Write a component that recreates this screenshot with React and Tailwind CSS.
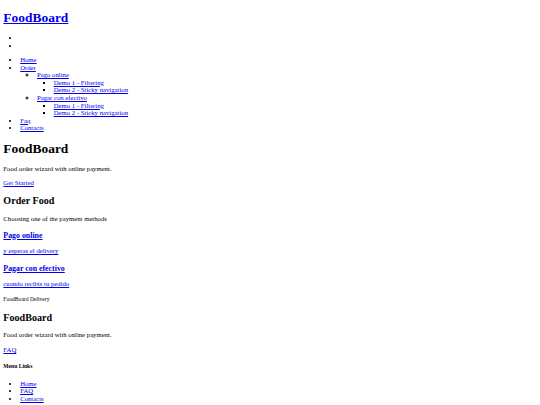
import React from 'react';

// enlaces con el estilo por defecto del navegador
const A = ({ children, className = '' }) => (
    <a href="#" className={`text-[#0000ee] underline ${className}`}>{children}</a>
);

const subMenus = [
    { title: 'Pago online', demos: ['Demo 1 - Filtering', 'Demo 2 - Sticky navigation'] },
    { title: 'Pagar con efectivo', demos: ['Demo 1 - Filtering', 'Demo 2 - Sticky navigation'] },
];

// cabecera con logo y menú
const Header = () => (
    <header>
        <h1 className="text-[13.44px] leading-[15.3px] font-bold mt-[9px] mb-[9px]">
            <A>FoodBoard</A>
        </h1>
        <ul className="list-disc pl-[16.8px] my-[6.72px]">
            <li className="min-h-[7.56px]"></li>
            <li className="min-h-[7.56px]"></li>
        </ul>
        <ul className="list-disc pl-[16.8px] my-[6.72px]">
            <li><A>Home</A></li>
            <li>
                <A>Order</A>
                <ul className="list-[circle] pl-[16.8px]">
                    {subMenus.map((m) => (
                        <li key={m.title}>
                            <A>{m.title}</A>
                            <ul className="list-[square] pl-[16.8px]">
                                {m.demos.map((d) => (
                                    <li key={d}><A>{d}</A></li>
                                ))}
                            </ul>
                        </li>
                    ))}
                </ul>
            </li>
            <li><A>Faq</A></li>
            <li><A>Contacts</A></li>
        </ul>
    </header>
);

const Hero = () => (
    <section>
        <h1 className="text-[13.44px] leading-[15.3px] font-bold my-[9px]">FoodBoard</h1>
        <p className="my-[6.72px]">Food order wizard with online payment.</p>
        <p className="my-[6.72px]"><A>Get Started</A></p>
    </section>
);

const OrderSection = () => (
    <section>
        <h2 className="text-[10.08px] leading-[11.5px] font-bold my-[8.37px]">Order Food</h2>
        <p className="my-[6.72px]">Choosing one of the payment methods</p>
        <h3 className="text-[7.86px] leading-[9px] font-bold my-[7.86px]"><A>Pago online</A></h3>
        <p className="my-[6.72px]"><A>y esperas el delivery</A></p>
        <h3 className="text-[7.86px] leading-[9px] font-bold mt-[8.6px] mb-[7.86px]"><A>Pagar con efectivo</A></h3>
        <p className="my-[6.72px]"><A>cuando recibis tu pedido</A></p>
    </section>
);

const Footer = () => (
    <footer>
        <p className="my-[6.72px]"><small className="text-[5.6px]">FoodBoard Delivery</small></p>
        <h2 className="text-[10.08px] leading-[11.5px] font-bold my-[8.37px]">FoodBoard</h2>
        <p className="my-[6.72px]">Food order wizard with online payment.</p>
        <p className="my-[6.72px]"><A>FAQ</A></p>
        <h5 className="text-[5.58px] leading-[6.3px] font-bold mt-[9.3px] mb-[11px]">Menu Links</h5>
        <ul className="list-disc pl-[16.8px] my-[6.72px]">
            <li><A>Home</A></li>
            <li><A>FAQ</A></li>
            <li><A>Contacts</A></li>
        </ul>
    </footer>
);

export default function App() {
    return (
        <div className="bg-white text-black font-['Liberation_Serif',serif] text-[6.72px] leading-[7.56px] px-[3.36px] py-px min-h-screen">
            <Header />
            <Hero />
            <OrderSection />
            <Footer />
        </div>
    );
}
